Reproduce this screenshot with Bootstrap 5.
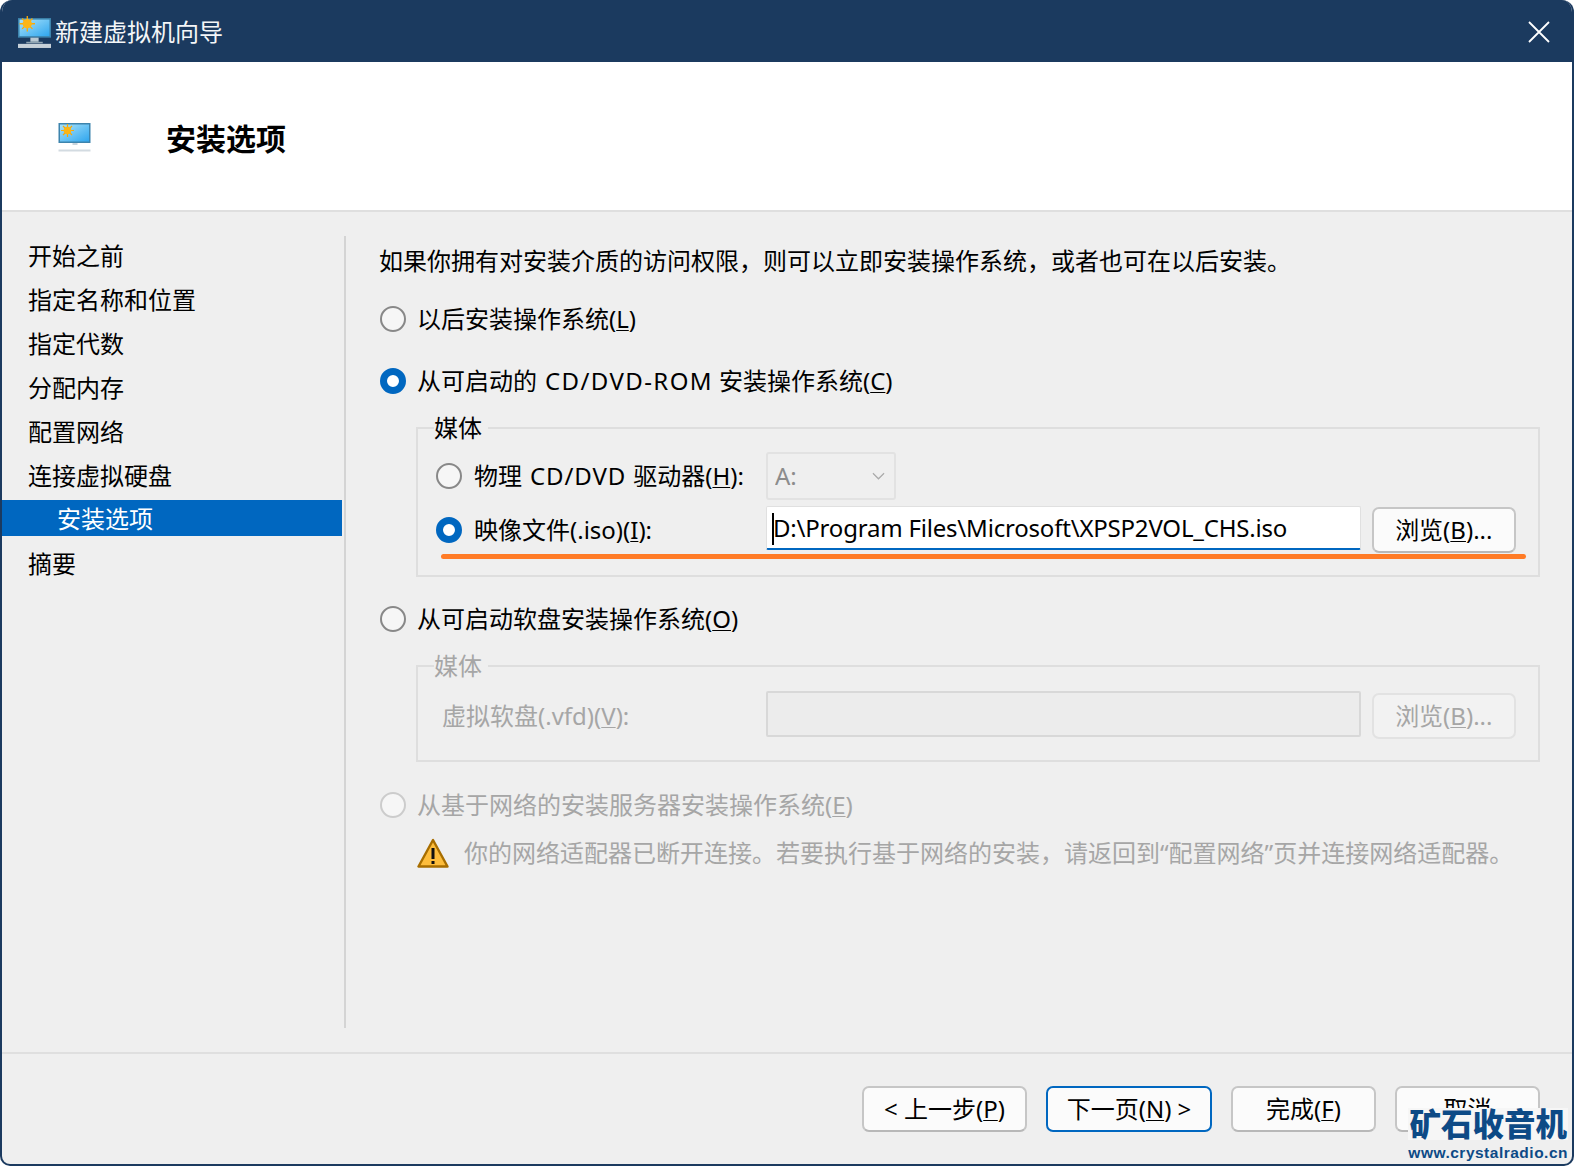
<!doctype html>
<html lang="zh-CN">
<head>
<meta charset="utf-8">
<title>新建虚拟机向导</title>
<link href="https://cdn.jsdelivr.net/npm/bootstrap@5.3.0/dist/css/bootstrap.min.css" rel="stylesheet">
<style>
html,body{height:100%;background:#fff;}
body{margin:0;overflow:hidden;font-family:"Noto Sans","Noto Sans CJK SC",sans-serif;font-size:24px;color:#000;}
.wiz-win{width:1574px;height:1166px;background:#efefef;border:2px solid #1b3a5f;border-top:0;border-radius:12px 12px 10px 10px;overflow:hidden;position:relative;}
.wiz-title{height:62px;background:#1b3a5f;color:#f4f6f8;margin:0 -2px;padding:2px 0 0 18px;gap:4px;flex:none;}
.wiz-close{margin-left:auto;margin-right:24px;}
.wiz-head{height:150px;background:#fff;border-bottom:2px solid #dfdfdf;padding-left:56px;flex:none;}
.wiz-headicon{margin-top:3px;}
.wiz-head h1{font-size:30px;font-weight:700;color:#000;margin:0 0 0 75px;line-height:1;position:relative;top:3px;}
.wiz-main{height:840px;flex:none;}
.wiz-side{width:340px;margin-top:23px;flex:none;}
.wiz-step{height:44px;line-height:42px;padding-left:26px;}
.wiz-step.is-on{height:36px;line-height:38px;margin:1px 0 7px;background:#0067c0;color:#fff;padding-left:55px;}
.wiz-sep{width:2px;background:#d4d4d4;margin:24px 0 0 2px;flex:none;height:792px;}
.wiz-body{padding:0 32px 0 33px;flex:1;min-width:0;}
.wiz-line{height:40px;white-space:nowrap;}
.wiz-intro{margin-top:29px;}
.wiz-radio{width:26px;height:26px;margin:0 12px 0 0;flex:none;border:2px solid #888;background-color:#f6f6f6;}
.wiz-line .wiz-radio{margin:0 11px 0 1px;}
.wiz-radio:checked{background-color:#fff;border:7px solid #0067c0;background-image:none;}
.wiz-radio:disabled{opacity:1;border-color:#ccc;background-color:#f6f6f6;}
.wiz-gap0{margin-top:18px;}
.wiz-gap1{margin-top:22px;}
.wiz-gap3{margin-top:23px;}
.wiz-grp{border:2px solid #dedede;margin:0 0 0 37px;padding:0 22px 0 18px;position:relative;}
.wiz-grp legend{float:none;width:auto;font-size:24px;line-height:36px;margin:0 0 0 -2px;padding:0 6px 0 0;}
.wiz-grp1{height:167px;margin-top:9px;}
.wiz-grp2{height:114px;margin-top:9px;}
.wiz-lab{width:330px;flex:none;white-space:nowrap;}
.wiz-labin{padding-left:6px;}
.wiz-rw1{height:48px;margin-top:6px;}
.wiz-rw2{height:48px;margin-top:6px;position:relative;}
.wiz-rw3{height:48px;margin-top:8px;}
.wiz-combo{width:130px;height:48px;background:#efefef url("data:image/svg+xml,%3csvg xmlns='http://www.w3.org/2000/svg' viewBox='0 0 14 8'%3e%3cpath fill='none' stroke='%23aaa' stroke-width='1.3' d='M1 1l6 6 6-6'/%3e%3c/svg%3e") no-repeat right 9px center/13px 8px;border:2px solid #e2e2e2;border-radius:3px;color:#8c8c8c;font-size:24px;padding:0 0 0 7px;opacity:1;}
.wiz-combo:disabled{background-color:#efefef;color:#8c8c8c;}
.wiz-field{width:597px;height:44px;margin-bottom:4px;background:#fff;border:1px solid #e0e0e0;border-bottom:2px solid #0067c0;border-radius:2px;position:relative;padding:0 0 0 6px;color:#000;font-size:24px;letter-spacing:-.2px;line-height:41px;white-space:nowrap;}
.wiz-caret{position:absolute;left:5px;top:6px;width:2px;height:32px;background:#000;}
.wiz-field.is-off{height:46px;background:#ececec;border:2px solid #d8d8d8;}
.wiz-btn{width:145px;height:46px;padding:0;background:#fbfbfb;border:2px solid #c6c6c6;border-bottom-color:#b8b8b8;border-radius:7px;font-size:24px;line-height:1;color:#000;white-space:nowrap;}
.wiz-btn:disabled{background:#f2f2f2;border:2px solid #e2e2e2;color:#a6a6a6;opacity:1;}
.wiz-browse{margin-left:11px;}
.wiz-mark{position:absolute;left:5px;right:-10px;bottom:-5px;height:5px;background:#ff7b26;border-radius:3px;}
.wiz-off{color:#a6a6a6;}
.wiz-warn{margin-top:10px;padding-left:38px;gap:15px;white-space:nowrap;color:#a6a6a6;}
.wiz-foot{border-top:2px solid #dfdfdf;height:114px;padding:32px 32px 0 0;gap:19px;}
.wiz-wide{width:165px;}
.wiz-primary{width:166px;border-color:#0067c0;border-bottom-color:#0067c0;}
.wiz-lat1{letter-spacing:1.4px;margin:0 6px 0 8px;}
.wiz-lat2{letter-spacing:.9px;margin:0 7px 0 8px;}
.wiz-wm{position:absolute;right:4px;bottom:-2px;color:#0d4a86;text-align:center;line-height:1;white-space:nowrap;}
.wiz-wm1{font-size:31.5px;font-weight:900;line-height:32px;background:#f6f6f6;}
.wiz-wm2{font-size:15.5px;font-weight:700;letter-spacing:.5px;line-height:26px;font-family:"Liberation Sans",sans-serif;}
u{text-underline-offset:2px;text-decoration-thickness:1px;}
</style>
</head>
<body>
<svg width="0" height="0" class="position-absolute">
<defs>
<linearGradient id="scr" x1="0" y1="0" x2="1" y2="1"><stop offset="0" stop-color="#a9e2fb"/><stop offset="1" stop-color="#2fa6ee"/></linearGradient>
<symbol id="pc" viewBox="0 0 32 32">
<rect x="0" y="2" width="32" height="19" fill="#3d84ad"/>
<rect x="1.5" y="3.5" width="29" height="16" fill="url(#scr)"/>
<rect x="12" y="21" width="8" height="4" fill="#b9c8d2"/>
<rect x="8" y="25" width="16" height="1.5" fill="#8fa4b2"/>
<rect x="0" y="27" width="32" height="4" fill="#c6d0d8"/>
<g stroke="#f8a908" stroke-width="1.3"><path d="M9 0v15M1.5 7.500h15M4 2.500l10 10M14 2.500L4 12.500"/></g>
<circle cx="9" cy="7.500" r="4.500" fill="#fdb515"/>
</symbol>
<symbol id="pcs" viewBox="0 0 32 29">
<rect x="0" y="0" width="32" height="20" fill="#3d84ad"/>
<rect x="1.500" y="1.500" width="29" height="17" fill="url(#scr)"/>
<rect x="14" y="20" width="5" height="2" fill="#c8d4dc"/>
<rect x="0" y="26.500" width="32" height="2" fill="#d3dbe1"/>
<g stroke="#f8a908" stroke-width="1.200"><path d="M9 1v13M2.500 7.500h13M4.500 3l9 9M13.500 3l-9 9"/></g>
<circle cx="9" cy="7.500" r="3.800" fill="#fdb515"/>
</symbol>
</defs>
</svg>
<div class="wiz-win d-flex flex-column">
  <div class="wiz-title d-flex align-items-center">
    <svg width="33" height="33"><use href="#pc"/></svg>
    <span>新建虚拟机向导</span>
    <svg class="wiz-close" width="22" height="22" viewBox="0 0 22 22"><path d="M1 1l20 20M21 1L1 21" stroke="#fff" stroke-width="1.8" fill="none"/></svg>
  </div>
  <div class="wiz-head d-flex align-items-center">
    <svg class="wiz-headicon" width="33" height="29"><use href="#pcs"/></svg>
    <h1>安装选项</h1>
  </div>
  <div class="wiz-main d-flex">
    <div class="wiz-side">
      <div class="wiz-step">开始之前</div>
      <div class="wiz-step">指定名称和位置</div>
      <div class="wiz-step">指定代数</div>
      <div class="wiz-step">分配内存</div>
      <div class="wiz-step">配置网络</div>
      <div class="wiz-step">连接虚拟硬盘</div>
      <div class="wiz-step is-on">安装选项</div>
      <div class="wiz-step">摘要</div>
    </div>
    <div class="wiz-sep"></div>
    <div class="wiz-body">
      <div class="wiz-intro wiz-line d-flex align-items-center">如果你拥有对安装介质的访问权限，则可以立即安装操作系统，或者也可在以后安装。</div>
      <div class="wiz-gap0 wiz-line d-flex align-items-center"><input class="form-check-input wiz-radio" type="radio" name="a">以后安装操作系统(<u>L</u>)</div>
      <div class="wiz-gap1 wiz-line d-flex align-items-center"><input class="form-check-input wiz-radio" type="radio" name="a" checked>从可启动的<span class="wiz-lat1">CD/DVD-ROM</span>安装操作系统(<u>C</u>)</div>
      <fieldset class="wiz-grp wiz-grp1">
        <legend>媒体</legend>
        <div class="wiz-rw1 d-flex align-items-center">
          <div class="wiz-lab d-flex align-items-center"><input class="form-check-input wiz-radio" type="radio" name="b">物理<span class="wiz-lat2">CD/DVD</span>驱动器(<u>H</u>):</div>
          <select class="form-select wiz-combo" disabled><option>A:</option></select>
        </div>
        <div class="wiz-rw2 d-flex align-items-center">
          <div class="wiz-lab d-flex align-items-center"><input class="form-check-input wiz-radio" type="radio" name="b" checked>映像文件(.iso)(<u>I</u>):</div>
          <div class="wiz-field"><span class="wiz-caret"></span>D:\Program Files\Microsoft\XPSP2VOL_CHS.iso</div>
          <button class="btn wiz-btn wiz-browse" type="button">浏览(<u>B</u>)...</button>
          <div class="wiz-mark"></div>
        </div>
      </fieldset>
      <div class="wiz-gap1 wiz-line d-flex align-items-center"><input class="form-check-input wiz-radio" type="radio" name="a">从可启动软盘安装操作系统(<u>O</u>)</div>
      <fieldset class="wiz-grp wiz-grp2 wiz-off">
        <legend>媒体</legend>
        <div class="wiz-rw3 d-flex align-items-center">
          <div class="wiz-lab wiz-labin">虚拟软盘(.vfd)(<u>V</u>):</div>
          <div class="wiz-field is-off"></div>
          <button class="btn wiz-btn wiz-browse" type="button" disabled>浏览(<u>B</u>)...</button>
        </div>
      </fieldset>
      <div class="wiz-gap3 wiz-line d-flex align-items-center wiz-off"><input class="form-check-input wiz-radio" type="radio" name="a" disabled>从基于网络的安装服务器安装操作系统(<u>E</u>)</div>
      <div class="wiz-warn d-flex align-items-center">
        <svg width="32" height="30" viewBox="0 0 32 30"><path d="M16 2L1.5 28.5h29z" fill="#fdbd3c" stroke="#a86e00" stroke-width="2.4" stroke-linejoin="round"/><rect x="14.5" y="10" width="3" height="11" fill="#111"/><rect x="14.5" y="23" width="3" height="3" fill="#111"/></svg>
        <span>你的网络适配器已断开连接。若要执行基于网络的安装，请返回到“配置网络”页并连接网络适配器。</span>
      </div>
    </div>
  </div>
  <div class="wiz-foot d-flex justify-content-end align-items-start">
    <button class="btn wiz-btn wiz-wide" type="button">&lt; 上一步(<u>P</u>)</button>
    <button class="btn wiz-btn wiz-primary" type="button">下一页(<u>N</u>) &gt;</button>
    <button class="btn wiz-btn" type="button">完成(<u>F</u>)</button>
    <button class="btn wiz-btn" type="button">取消</button>
  </div>
  <div class="wiz-wm">
    <div class="wiz-wm1">矿石收音机</div>
    <div class="wiz-wm2">www.crystalradio.cn</div>
  </div>
</div>
<script src="https://cdn.jsdelivr.net/npm/bootstrap@5.3.0/dist/js/bootstrap.bundle.min.js"></script>
</body>
</html>
